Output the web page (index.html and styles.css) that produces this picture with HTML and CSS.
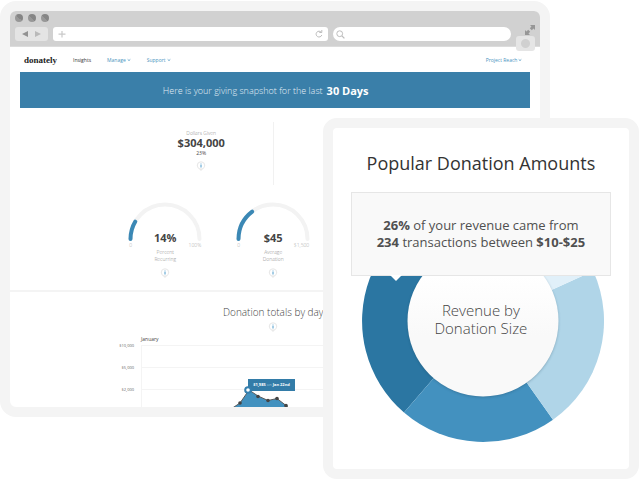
FILE: index.html
```html
<!DOCTYPE html>
<html lang="en">
<head>
<meta charset="utf-8">
<title>Donately</title>
<link rel="stylesheet" href="styles.css">
</head>
<body>
<svg class="defs" width="0" height="0" aria-hidden="true">
  <symbol id="pin" viewBox="0 0 10 10">
    <path d="M5 10 3.200 8.200A4.200 4.200 0 1 1 6.800 8.200Z" fill="#e9e9e9"/>
    <circle cx="5" cy="4.500" r="3" fill="#fff"/>
    <path d="M5 2.600v.9M5 4v2.500" stroke="#4a9acb" stroke-width="1"/>
  </symbol>
  <symbol id="chevron" viewBox="0 0 4 4">
    <path d="M.7 1.400 2 2.600 3.300 1.400" fill="none" stroke="currentColor" stroke-width=".8"/>
  </symbol>
</svg>
<div class="stage">
  <div class="browser">
    <header class="chrome">
      <div class="dots"><span></span><span></span><span></span></div>
      <div class="toolbar">
        <div class="history">
          <button type="button" aria-label="Back"><svg width="6" height="6" viewBox="0 0 6 6"><path d="M6 0v6L0 3Z" fill="#929292"/></svg></button>
          <button type="button" aria-label="Forward"><svg width="6" height="6" viewBox="0 0 6 6"><path d="M0 0v6l6-3Z" fill="#b9b9b9"/></svg></button>
        </div>
        <div class="field address">
          <svg width="8" height="8" viewBox="0 0 8 8"><path d="M4 1v6.500M.5 4.200h7" stroke="#c9c9c9" stroke-width="1.200"/></svg>
          <input type="text" aria-label="Address">
          <svg width="8" height="8" viewBox="0 0 8 8"><path d="M6.300 2.300A2.900 2.900 0 1 0 6.800 5M4.300 2.500h2.500V0" fill="none" stroke="#bdbdbd"/></svg>
        </div>
        <div class="field search">
          <svg width="9" height="9" viewBox="0 0 9 9"><circle cx="3.700" cy="3.700" r="2.900" fill="none" stroke="#bdbdbd"/><path d="m5.900 5.900 2.500 2.500" stroke="#bdbdbd" stroke-width="1.300"/></svg>
          <input type="search" aria-label="Search">
        </div>
      </div>
      <svg class="expand" width="10" height="10" viewBox="0 0 10 10"><path d="M5 0h5v5L8.500 3.500 6.800 5.200 4.800 3.200 6.500 1.500ZM0 5l1.500 1.500 1.700-1.700 2 2L3.500 8.500 5 10H0Z" fill="#969696"/></svg>
      <button type="button" class="record" aria-label="Capture"></button>
    </header>

    <nav class="nav">
      <a class="logo" href="#">donately</a>
      <a class="current" href="#">Insights</a>
      <a href="#">Manage <svg width="4" height="4"><use href="#chevron"/></svg></a>
      <a href="#">Support <svg width="4" height="4"><use href="#chevron"/></svg></a>
      <a class="account" href="#">Project Reach <svg width="4" height="4"><use href="#chevron"/></svg></a>
    </nav>

    <p class="banner">Here is your giving snapshot for the last <strong>30 Days</strong></p>

    <section class="summary">
      <div class="given">
        <span class="label">Dollars Given</span>
        <strong>$304,000</strong>
        <span class="change">23%</span>
        <svg width="10" height="10"><use href="#pin"/></svg>
      </div>
    </section>

    <section class="gauges">
      <div class="gauge">
        <div class="dial">
          <svg width="76" height="40" viewBox="0 0 76 40" fill="none" stroke-width="4" stroke-linecap="round">
            <path d="M3.500 37A34.500 34.500 0 0 1 72.500 37" stroke="#f3f3f3"/>
            <path d="M3.500 37A34.500 34.500 0 0 1 8.300 19.600" stroke="#3b88b5"/>
          </svg>
          <strong>14%</strong>
        </div>
        <div class="range"><span>0</span><span>100%</span></div>
        <p class="label">Percent<br>Recurring</p>
        <svg width="10" height="10"><use href="#pin"/></svg>
      </div>
      <div class="gauge">
        <div class="dial">
          <svg width="76" height="40" viewBox="0 0 76 40" fill="none" stroke-width="4" stroke-linecap="round">
            <path d="M3.500 37A34.500 34.500 0 0 1 72.500 37" stroke="#f3f3f3"/>
            <path d="M3.500 37A34.500 34.500 0 0 1 17.200 9.700" stroke="#3b88b5"/>
          </svg>
          <strong>$45</strong>
        </div>
        <div class="range"><span>0</span><span>$1,500</span></div>
        <p class="label">Average<br>Donation</p>
        <svg width="10" height="10"><use href="#pin"/></svg>
      </div>
    </section>

    <section class="totals">
      <h2>Donation totals by day</h2>
      <svg class="pin" width="10" height="10"><use href="#pin"/></svg>
      <div class="chart">
        <div class="scale"><span>$10,000</span><span>$5,000</span><span>$2,000</span></div>
        <div class="series">
          <span class="month">January</span>
          <div class="plot">
            <svg width="160" height="64" viewBox="0 0 160 64">
              <path d="M86 66 98 58 107 45 116 51 126 55.500 135 53.500 144 60.500 152 68Z" fill="#4291bf"/>
              <path d="M86 66 98 58 107 45 116 51 126 55.500 135 53.500 144 60.500 152 68" fill="none" stroke="#5b5b5b"/>
              <g fill="#444"><circle cx="98" cy="58" r="1.800"/><circle cx="116" cy="51.500" r="1.800"/><circle cx="126" cy="55.500" r="1.800"/><circle cx="135" cy="53.500" r="1.800"/><circle cx="144" cy="60.500" r="1.800"/></g>
            </svg>
            <div class="tip"><b>$1,985</b> on <b>Jan 22nd</b></div>
            <svg class="marker" width="8" height="8" viewBox="0 0 8 8"><circle cx="4" cy="4" r="2.800" fill="#fff" stroke="#347fae" stroke-width="2"/></svg>
          </div>
        </div>
      </div>
    </section>
  </div>

  <section class="card">
    <h1>Popular Donation Amounts</h1>
    <p class="callout"><strong>26%</strong> of your revenue came from<br><strong>234</strong> transactions between <strong>$10-$25</strong></p>
    <div class="donut">
      <svg width="242" height="242" viewBox="0 0 242 242" aria-hidden="true">
        <defs>
          <linearGradient id="hub" x1="0" y1="0" x2="0" y2="1"><stop offset=".2" stop-color="#fff"/><stop offset=".6" stop-color="#f9f9f9"/></linearGradient>
          <filter id="soft" x="-10%" y="-10%" width="120%" height="120%"><feGaussianBlur stdDeviation="1.500"/></filter>
        </defs>
        <path d="M121 121V0A121 121 0 0 0 42 212.600Z" fill="#2b76a2"/>
        <path d="M121 121 42 212.600A121 121 0 0 0 191 219.700Z" fill="#4391bf"/>
        <path d="M121 121 191 219.700A121 121 0 0 0 231.200 71Z" fill="#b0d5e8"/>
        <path d="M121 121 231.200 71A121 121 0 0 0 121 0Z" fill="#e1f0f9"/>
        <circle cx="121" cy="122" r="75" fill="#1d4056" opacity=".4" filter="url(#soft)"/>
        <circle cx="121" cy="121" r="75.500" fill="url(#hub)"/>
      </svg>
      <p>Revenue by<br>Donation Size</p>
    </div>
  </section>
</div>
</body>
</html>
```
FILE: styles.css
```css
* { box-sizing: border-box; }

body {
  margin: 0;
  background: #fff;
  color: #444;
  font-family: "Open Sans", "Noto Sans", sans-serif;
}

h1, h2, p { margin: 0; }
svg { display: block; flex: none; }
a { color: #4a94c0; text-decoration: none; }
button { border: 0; padding: 0; background: none; }
.defs { position: absolute; }

.stage {
  position: relative;
  padding-top: 1px;
  min-height: 481px;
}

/* Browser window */
.browser {
  margin-right: 14%;
  border: 10px solid #f4f4f4;
  border-radius: 16px;
  background: #fff;
}

.chrome {
  position: relative;
  padding: 3px 29px 5px 5px;
  border-radius: 6px 6px 0 0;
  border-bottom: 1px solid #dcdcdc;
  background: #d1d1d1;
}

.dots {
  display: flex;
  gap: 5px;
  height: 13px;
}

.dots span {
  width: 8px;
  height: 8px;
  border-radius: 50%;
  background: linear-gradient(45deg, #979797 50%, #858585 50%);
}

.toolbar { display: flex; gap: 5px; height: 14px; }

.history {
  display: flex;
  align-items: center;
  justify-content: space-evenly;
  width: 33px;
  border-radius: 3px;
  background: #e4e4e4;
}

.field {
  display: flex;
  align-items: center;
  padding: 0 5px;
  background: #fff;
}

.field input {
  flex: 1;
  min-width: 0;
  height: 12px;
  padding: 0;
  border: 0;
  outline: 0;
  background: none;
  font-size: 8px;
}

.address { flex: 274; border-radius: 3px; }
.search { flex: 179; padding: 0 3px; border-radius: 7px; }

.expand { position: absolute; top: 14px; right: 5px; }

.record {
  position: absolute;
  right: 5px;
  bottom: -5px;
  width: 19px;
  height: 15px;
  border-radius: 3px;
  background: radial-gradient(circle, #d0d0d0 4px, #e5e5e5 5px);
}

.nav {
  display: flex;
  align-items: center;
  gap: 16px;
  height: 25px;
  padding: 0 18px 0 14px;
  font-size: 5px;
}

.nav a { display: flex; align-items: center; gap: 1px; }
.nav .logo {
  color: #222;
  font: bold 9px "Liberation Serif", serif;
}
.nav .current { color: #333; }
.nav .account { margin-left: auto; }

.banner {
  display: flex;
  align-items: center;
  justify-content: center;
  gap: 4px;
  height: 36px;
  margin: 0 10px;
  padding-right: 19px;
  background: #3a7fa9;
  color: #e3eef5;
  font-size: 9px;
  font-weight: 300;
}

.banner strong { color: #fff; font-size: 11px; font-weight: 700; }

.label { color: #888; font-size: 5px; line-height: 7px; font-weight: 300; }

.summary {
  display: grid;
  grid-template-columns: 145px 145px;
  justify-content: center;
  margin-top: 14px;
  padding-right: 2px;
}

.given {
  display: flex;
  flex-direction: column;
  align-items: center;
  height: 63px;
  padding-top: 8px;
  border-right: 1px solid #f1f1f1;
}

.given strong { font-size: 11px; line-height: 12px; }
.given .change { margin-bottom: 4px; font-size: 5px; line-height: 8px; }

.gauges {
  display: grid;
  grid-template-columns: repeat(3, 108px);
  justify-content: center;
  margin-top: 17px;
  padding-right: 4px;
}

.gauge {
  display: flex;
  flex-direction: column;
  align-items: center;
}

.dial { display: grid; justify-items: center; align-items: end; }
.dial > * { grid-area: 1 / 1; }
.dial strong { font-size: 11px; line-height: 8px; }

.range {
  display: flex;
  justify-content: space-between;
  width: 76px;
  padding: 0 2px;
  color: #aaa;
  font-size: 5px;
  line-height: 7px;
  font-weight: 300;
}

.gauge .label { margin-bottom: 5px; text-align: center; }

.totals {
  height: 117px;
  margin-top: 12px;
  padding-right: 4px;
  border-top: 2px solid #f4f4f4;
  overflow: hidden;
}

.totals h2 {
  padding-top: 12px;
  font-size: 10px;
  line-height: 16px;
  font-weight: 300;
  text-align: center;
}

.totals .pin { margin: 2px auto 0; }

.chart { display: flex; gap: 7px; }

.scale {
  width: 124px;
  padding-top: 3px;
  color: #666;
  font-size: 4px;
  line-height: 22px;
  text-align: right;
}

.scale span { display: block; }
.series { flex: 1; }
.month { display: block; padding-top: 1px; font-size: 5px; line-height: 12px; }

.plot {
  position: relative;
  height: 64px;
  border-left: 1px solid #f4f4f4;
  background: repeating-linear-gradient(#f4f4f4 0 1px, transparent 1px 22px);
}

.tip {
  position: absolute;
  top: 34px;
  left: 106px;
  width: 47px;
  background: #337ca8;
  color: #9cc6df;
  font-size: 4px;
  line-height: 12px;
  text-align: center;
  white-space: nowrap;
}

.tip b { color: #fff; }
.marker { position: absolute; top: 41px; left: 102px; }

/* Detail card */
.card {
  position: absolute;
  top: 118px;
  right: 1px;
  width: 49.4%;
  min-height: 361px;
  padding: 23px 18px;
  border: 10px solid #f4f4f4;
  border-radius: 14px;
  background: #fff;
}

.card h1 {
  color: #333;
  font-size: 18px;
  line-height: 24px;
  font-weight: 400;
  text-align: center;
  white-space: nowrap;
}

.callout {
  position: relative;
  z-index: 1;
  margin-top: 17px;
  padding: 24px 0;
  border: 1px solid #e6e6e6;
  background: #f9f9f9;
  color: #505050;
  font-size: 13px;
  line-height: 17px;
  text-align: center;
  white-space: nowrap;
}

.callout::after {
  content: "";
  position: absolute;
  top: 100%;
  left: 38px;
  border: 6px solid transparent;
  border-top-color: #fff;
  border-bottom: 0;
}

.donut {
  display: grid;
  place-items: center;
  margin: -76px 0 0 4px;
}

.donut > * { grid-area: 1 / 1; }

.donut p {
  padding: 0 4px 4px 0;
  font-size: 15px;
  line-height: 18px;
  font-weight: 300;
  text-align: center;
}
```
